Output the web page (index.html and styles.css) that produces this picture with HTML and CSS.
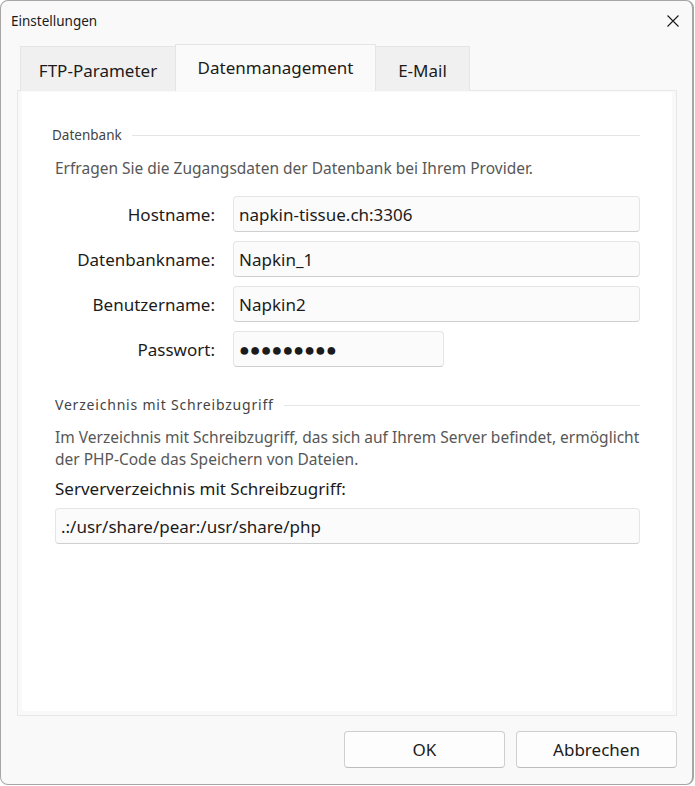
FILE: index.html
```html
<!DOCTYPE html>
<html lang="de">

<head>
  <meta charset="UTF-8">
  <meta name="viewport" content="width=device-width, initial-scale=1.0">
  <title>Einstellungen</title>
  <link rel="stylesheet" href="styles.css">
</head>

<body>
  <div class="window">
    <div class="titlebar">
      <span class="title">Einstellungen</span>
      <svg class="close" width="12" height="12" viewBox="0 0 12 12">
        <path d="M0.5 0.5 L11.5 11.5 M11.5 0.5 L0.5 11.5" stroke="#1b1b1b" stroke-width="1.1" fill="none" />
      </svg>
    </div>

    <div class="body">
      <div class="tabs">
        <div class="tab tab-ftp">FTP-Parameter</div>
        <div class="tab active">Datenmanagement</div>
        <div class="tab tab-mail">E-Mail</div>
      </div>

      <div class="panel">
        <div class="page">
          <div class="legend">
            <span>Datenbank</span>
            <div class="rule"></div>
          </div>
          <p class="hint">Erfragen Sie die Zugangsdaten der Datenbank bei Ihrem Provider.</p>

          <div class="form">
            <label for="host">Hostname:</label>
            <input id="host" class="field" type="text" value="napkin-tissue.ch:3306">
            <label for="dbname">Datenbankname:</label>
            <input id="dbname" class="field" type="text" value="Napkin_1">
            <label for="user">Benutzername:</label>
            <input id="user" class="field" type="text" value="Napkin2">
            <label for="pass">Passwort:</label>
            <div id="pass" class="field field-short">●●●●●●●●●</div>
          </div>

          <div class="legend legend-dir">
            <span>Verzeichnis mit Schreibzugriff</span>
            <div class="rule"></div>
          </div>
          <p class="hint hint-dir">Im Verzeichnis mit Schreibzugriff, das sich auf Ihrem Server befindet, ermöglicht der PHP-Code das Speichern von Dateien.</p>
          <label class="dir-label" for="dir">Serververzeichnis mit Schreibzugriff:</label>
          <input id="dir" class="field field-dir" type="text" value=".:/usr/share/pear:/usr/share/php">
        </div>
      </div>

      <div class="buttons">
        <button class="btn">OK</button>
        <button class="btn">Abbrechen</button>
      </div>
    </div>
  </div>
</body>

</html>
```

FILE: styles.css
```css
body {
  margin: 0;
  background-color: #ffffff;
  font-family: 'Noto Sans', 'Open Sans', sans-serif;
  color: #1b1b1b;
}

.window {
  box-sizing: border-box;
  width: 694px;
  height: 785px;
  border: 1px solid #a6a6a6;
  border-right-width: 2px;
  border-radius: 8px;
  background-color: #f9f9f9;
  display: flex;
  flex-direction: column;
  overflow: hidden;
}

.titlebar {
  height: 43px;
  display: flex;
  align-items: center;
  justify-content: space-between;
  padding: 0 13px 4px 10px;
  box-sizing: border-box;
}

.title {
  font-size: 13.5px;
}

.body {
  padding: 0 15px 0 16px;
  display: flex;
  flex-direction: column;
  flex: 1;
}

/* tabs sit on the panel border */
.tabs {
  display: flex;
  align-items: flex-end;
  padding-left: 3px;
  height: 47px;
  margin-bottom: -1px;
  position: relative;
  z-index: 1;
}

.tab {
  box-sizing: border-box;
  height: 45px;
  border: 1px solid #e5e5e5;
  border-bottom: none;
  background-color: #f0f0f0;
  font-size: 17px;
  text-align: center;
  padding-top: 12px;
}

.tab-ftp {
  width: 155px;
  border-right: none;
}

.tab-mail {
  width: 94px;
  border-left: none;
}

.tab.active {
  width: 201px;
  height: 47px;
  padding-top: 11px;
  background-color: #fafafa;
}

.panel {
  height: 626px;
  box-sizing: border-box;
  border: 1px solid #e8e8e8;
  padding: 1px 4px 4px 4px;
}

.page {
  height: 100%;
  background-color: #ffffff;
  padding: 34px 32px 0 30px;
  box-sizing: border-box;
}

.legend {
  display: flex;
  align-items: center;
  gap: 10px;
  font-size: 13.5px;
  line-height: 18px;
  color: #444444;
}

.rule {
  flex: 1;
  height: 1px;
  background-color: #e5e5e5;
}

.hint {
  margin: 13px 0 0 3px;
  font-size: 15.5px;
  line-height: 22px;
  color: #575757;
}

.form {
  display: grid;
  grid-template-columns: 163px 1fr;
  column-gap: 18px;
  row-gap: 9px;
  align-items: center;
  margin-top: 17px;
}

.form label {
  text-align: right;
  font-size: 17px;
}

.field {
  box-sizing: border-box;
  height: 36px;
  width: 100%;
  margin: 0;
  border: 1px solid #e5e5e5;
  border-bottom-color: #cfcfcf;
  border-radius: 4px;
  background-color: #fbfbfb;
  padding: 0 5px;
  font-family: inherit;
  font-size: 17px;
  color: #1b1b1b;
  line-height: 34px;
  outline: none;
}

.field-short {
  width: 211px;
  font-size: 18px;
}

.legend-dir {
  margin: 29px 0 0 3px;
  font-size: 14px;
  letter-spacing: 0.8px;
}

.hint-dir {
  margin-top: 12px;
}

.dir-label {
  display: block;
  margin: 7px 0 0 3px;
  font-size: 17px;
  line-height: 24px;
}

.field-dir {
  display: block;
  width: calc(100% - 3px);
  margin: 7px 0 0 3px;
}

.buttons {
  display: flex;
  justify-content: flex-end;
  gap: 11px;
  margin-top: 15px;
}

.btn {
  box-sizing: border-box;
  width: 161px;
  height: 37px;
  border: 1px solid #cfcfcf;
  border-bottom-color: #bdbdbd;
  border-radius: 4px;
  background-color: #fdfdfd;
  font-family: inherit;
  font-size: 17px;
  color: #1b1b1b;
}
```
